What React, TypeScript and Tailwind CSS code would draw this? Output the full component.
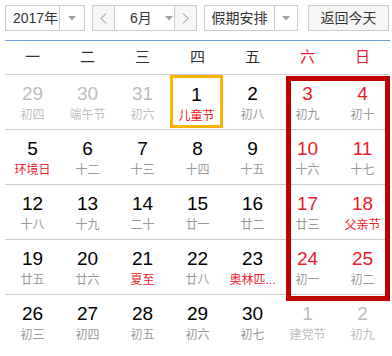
type Day = {
  n: number;
  l: string;
  other?: boolean;
  fest?: boolean;
  today?: boolean;
};

const rows: Day[][] = [
  [
    { n: 29, l: "初四", other: true },
    { n: 30, l: "端午节", other: true },
    { n: 31, l: "初六", other: true },
    { n: 1, l: "儿童节", fest: true, today: true },
    { n: 2, l: "初八" },
    { n: 3, l: "初九" },
    { n: 4, l: "初十" },
  ],
  [
    { n: 5, l: "环境日", fest: true },
    { n: 6, l: "十二" },
    { n: 7, l: "十三" },
    { n: 8, l: "十四" },
    { n: 9, l: "十五" },
    { n: 10, l: "十六" },
    { n: 11, l: "十七" },
  ],
  [
    { n: 12, l: "十八" },
    { n: 13, l: "十九" },
    { n: 14, l: "二十" },
    { n: 15, l: "廿一" },
    { n: 16, l: "廿二" },
    { n: 17, l: "廿三" },
    { n: 18, l: "父亲节", fest: true },
  ],
  [
    { n: 19, l: "廿五" },
    { n: 20, l: "廿六" },
    { n: 21, l: "夏至", fest: true },
    { n: 22, l: "廿八" },
    { n: 23, l: "奥林匹...", fest: true },
    { n: 24, l: "初一" },
    { n: 25, l: "初二" },
  ],
  [
    { n: 26, l: "初三" },
    { n: 27, l: "初四" },
    { n: 28, l: "初五" },
    { n: 29, l: "初六" },
    { n: 30, l: "初七" },
    { n: 1, l: "建党节", other: true },
    { n: 2, l: "初九", other: true },
  ],
];

const weekdays = ["一", "二", "三", "四", "五", "六", "日"];

function Arrow() {
  return (
    <svg width="8" height="5" viewBox="0 0 8 5">
      <path d="M0 0h8L4 4.5z" fill="#a0a0a0" />
    </svg>
  );
}

function Chevron({ dir }: { dir: "l" | "r" }) {
  return (
    <svg width="7" height="11" viewBox="0 0 7 11">
      <path
        d={dir === "l" ? "M6 0.5L1 5.5l5 5" : "M1 0.5l5 5-5 5"}
        fill="none"
        stroke="#888"
        strokeWidth="1"
      />
    </svg>
  );
}

function Cell({ d, col }: { d: Day; col: number }) {
  const weekend = col >= 5;
  let numColor = "text-black";
  if (d.other) numColor = "text-[#bdbdbd]";
  else if (weekend) numColor = "text-[#e8202a]";
  let lunarColor = "text-[#999]";
  if (d.other) lunarColor = "text-[#bdbdbd]";
  else if (d.fest) lunarColor = "text-[#e8202a]";

  return (
    <div className="h-[54px] flex">
      <div
        className={
          d.today
            ? "w-[53px] h-[53px] border-[3px] border-[#fdb400] flex flex-col items-center pt-[7px]"
            : "flex-1 flex flex-col items-center pt-[9px]"
        }
      >
        <div className={`text-[19px] leading-[20px] ${numColor}`}>{d.n}</div>
        <div className={`text-[12px] leading-[16px] mt-[3px] whitespace-nowrap ${lunarColor}`}>
          {d.l}
        </div>
      </div>
    </div>
  );
}

export default function App() {
  return (
    <div
      className="relative w-[392px] h-[356px] bg-white overflow-hidden text-[#333]"
      style={{ fontFamily: '"Liberation Sans", Arial, "Noto Sans CJK SC", sans-serif' }}
    >
      {/* toolbar */}
      <div className="flex items-start pt-[5px] pl-[5px] text-[14px]">
        <div className="flex h-[26px] w-[80px] border border-[#ccc]">
          <div className="w-[54px] flex items-center justify-center pl-[6px] border-r border-[#ccc]">
            2017年
          </div>
          <div className="flex-1 flex items-center justify-center">
            <Arrow />
          </div>
        </div>
        <div className="flex h-[26px] w-[105px] ml-[7px] border border-[#ccc]">
          <div className="w-[22px] flex items-center justify-center bg-[#f6f6f6] border-r border-[#ccc]">
            <Chevron dir="l" />
          </div>
          <div className="flex-1 flex items-center pl-[15px]">
            <span>6月</span>
            <span className="ml-[13px] flex">
              <Arrow />
            </span>
          </div>
          <div className="w-[22px] flex items-center justify-center bg-[#f6f6f6] border-l border-[#ccc]">
            <Chevron dir="r" />
          </div>
        </div>
        <div className="flex h-[26px] w-[94px] ml-[7px] border border-[#ccc]">
          <div className="w-[70px] flex items-center justify-center border-r border-[#ccc]">
            假期安排
          </div>
          <div className="flex-1 flex items-center justify-center">
            <Arrow />
          </div>
        </div>
        <div className="flex h-[26px] w-[81px] ml-[10px] border border-[#ccc] bg-[#f6f6f6] items-center justify-center">
          返回今天
        </div>
      </div>

      {/* calendar */}
      <div className="mt-[9px] ml-[5px] w-[385px] border-t-[1.5px] border-[#6a9fdf]">
        <div className="grid grid-cols-7 h-[33px] items-center text-[15px]">
          {weekdays.map((w, i) => (
            <div
              key={w}
              className={`text-center ${i >= 5 ? "text-[#e8202a]" : "text-[#333]"}`}
            >
              {w}
            </div>
          ))}
        </div>
        {rows.map((r, ri) => (
          <div key={ri} className="grid grid-cols-7 border-t border-[#ccc]">
            {r.map((d, ci) => (
              <Cell key={ci} d={d} col={ci} />
            ))}
          </div>
        ))}
      </div>

      {/* weekend highlight */}
      <div className="absolute left-[286px] top-[76px] w-[104px] h-[225px] border-[5px] border-[#c00000]" />
    </div>
  );
}
